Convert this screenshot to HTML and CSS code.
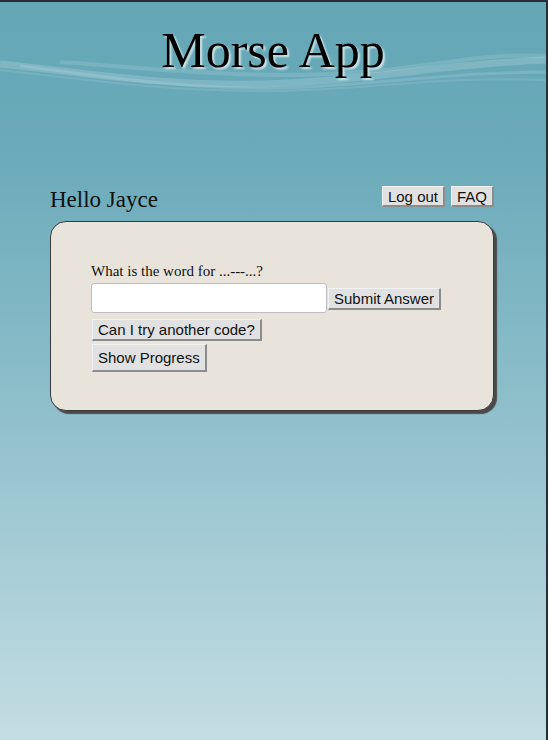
FILE: index.html
```html
<!DOCTYPE html>
<html>
<head>
<meta charset="utf-8">
<link rel="stylesheet" href="styles.css">
</head>
<body>
<div class="window">
  <header class="header">
    <svg class="wave" width="546" height="110" viewBox="0 0 546 110">
      <path d="M0 62 C 80 70, 160 84, 260 82 S 440 62, 546 58" fill="none" stroke="#ffffff" stroke-opacity="0.16" stroke-width="7"/>
      <path d="M20 64 C 100 74, 190 88, 280 86 S 450 70, 546 70" fill="none" stroke="#ffffff" stroke-opacity="0.13" stroke-width="3"/>
      <path d="M0 68 C 90 78, 170 90, 270 89 S 430 74, 546 78" fill="none" stroke="#ffffff" stroke-opacity="0.10" stroke-width="2"/>
      <path d="M60 60 C 150 66, 230 76, 330 72 S 470 50, 546 54" fill="none" stroke="#ffffff" stroke-opacity="0.12" stroke-width="4"/>
    </svg>
    <h1 class="title">Morse App</h1>
  </header>
  <main class="main">
    <div class="topbar">
      <h2 class="hello">Hello Jayce</h2>
      <div class="actions">
        <button class="btn">Log out</button>
        <button class="btn">FAQ</button>
      </div>
    </div>
    <section class="card">
      <p class="question">What is the word for ...---...?</p>
      <div class="answer-row">
        <input class="answer" type="text">
        <button class="btn">Submit Answer</button>
      </div>
      <button class="btn block try">Can I try another code?</button>
      <button class="btn block progress">Show Progress</button>
    </section>
  </main>
</div>
</body>
</html>
```

FILE: styles.css
```css
html, body {
  margin: 0;
  padding: 0;
  height: 100%;
}
body {
  background: #2b2f36;
}
.window {
  box-sizing: border-box;
  width: 548px;
  height: 740px;
  border-top: 2px solid #2b2d34;
  border-right: 2px solid #263034;
  background: linear-gradient(to bottom, #65a7b6 0%, #6aaaba 20%, #8fbfcb 55%, #c3dde3 100%);
  font-family: "Liberation Serif", "Times New Roman", serif;
  color: #111;
  overflow: hidden;
}
.header {
  position: relative;
  height: 108px;
  display: flex;
  justify-content: center;
}
.wave {
  position: absolute;
  left: 0;
  top: 0;
}
.title {
  position: relative;
  margin: 0;
  padding-top: 20px;
  font-size: 50px;
  font-weight: normal;
  line-height: 56px;
  color: #000;
  text-shadow: 2px 2px 2px #cfe6ea;
}
.main {
  width: 444px;
  margin: 76px 0 0 50px;
}
.topbar {
  display: flex;
  justify-content: space-between;
  align-items: flex-start;
  height: 35px;
}
.hello {
  margin: 0;
  padding-top: 1px;
  font-size: 23px;
  font-weight: normal;
  line-height: 26px;
  color: #111;
}
.actions {
  display: flex;
  gap: 6px;
}
.btn {
  font-family: "Liberation Sans", Arial, sans-serif;
  font-size: 15px;
  line-height: 17px;
  color: #111;
  background: #e1e1e1;
  border: 1px solid;
  border-color: #f2f2f2 #8c8c8c #8c8c8c #f2f2f2;
  border-width: 1px 2px 2px 1px;
  padding: 1px 5px 0;
  margin: 0;
  border-radius: 0;
}
.card {
  box-sizing: border-box;
  height: 190px;
  background: #e8e4db;
  border: 1px solid #3a3a3a;
  border-radius: 16px;
  box-shadow: 3px 3px 1px #4a4a4a;
  padding: 40px 40px 0 40px;
}
.question {
  margin: 0 0 3px;
  font-size: 15px;
  line-height: 18px;
}
.answer-row {
  display: flex;
  align-items: center;
  gap: 1px;
}
.answer {
  box-sizing: border-box;
  width: 236px;
  height: 30px;
  margin: 0;
  border: 1px solid #bdbdbd;
  border-radius: 3px;
  background: #fff;
}
.answer-row .btn {
  margin-top: 2px;
  padding: 1px 5px 1px;
}
.block {
  display: block;
}
.try {
  margin-top: 6px;
  margin-left: 1px;
  padding: 1px 5px 1px;
}
.progress {
  margin-top: 3px;
  margin-left: 1px;
  padding: 4px 5px 4px;
}
```
